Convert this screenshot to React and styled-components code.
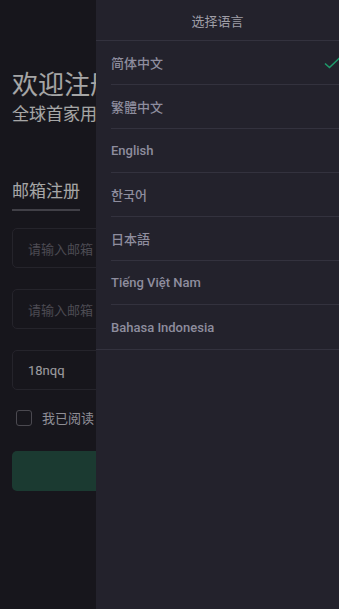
import React from 'react';
import styled, { createGlobalStyle } from 'styled-components';

const GlobalStyle = createGlobalStyle`
  html, body {
    margin: 0;
    padding: 0;
    background: #17161c;
    font-family: Roboto, "Noto Sans CJK SC", sans-serif;
  }
  * { box-sizing: border-box; }
`;

const languages = [
  { label: '简体中文', active: true },
  { label: '繁體中文' },
  { label: 'English' },
  { label: '한국어' },
  { label: '日本語' },
  { label: 'Tiếng Việt Nam' },
  { label: 'Bahasa Indonesia' },
];

const Screen = styled.div`
  position: relative;
  width: 339px;
  height: 609px;
  overflow: hidden;
  background: #24222b;
`;

const Page = styled.div`
  display: flex;
  flex-direction: column;
  padding: 70px 12px 0;
`;

const Title = styled.h1`
  margin: 0;
  font-size: 26px;
  font-weight: 400;
  line-height: 30px;
  color: #ffffff;
  white-space: nowrap;
`;

const Subtitle = styled.p`
  margin: 2px 0 0;
  font-size: 17px;
  line-height: 24px;
  color: #ffffff;
  white-space: nowrap;
`;

const Tab = styled.div`
  align-self: flex-start;
  margin-top: 53px;
  padding-bottom: 6px;
  font-size: 17px;
  line-height: 24px;
  color: #ffffff;
  border-bottom: 2px solid #64636d;
`;

const Form = styled.div`
  display: flex;
  flex-direction: column;
  gap: 21px;
  margin-top: 17px;
`;

const Field = styled.div`
  height: 40px;
  display: flex;
  align-items: center;
  padding: 0 15px;
  border: 1px solid #3a3843;
  border-radius: 5px;
  font-size: 13px;
  white-space: nowrap;
  color: ${(p) => (p.$filled ? '#f0eff6' : '#75737f')};
`;

const Agree = styled.label`
  display: flex;
  align-items: center;
  gap: 10px;
  margin-top: 18px;
  padding-left: 4px;
  font-size: 13px;
  color: #dcdbe5;
  white-space: nowrap;
`;

const Box = styled.span`
  width: 16px;
  height: 16px;
  border: 1px solid #73717c;
  border-radius: 3px;
`;

const SubmitButton = styled.div`
  margin-top: 24px;
  height: 40px;
  border-radius: 5px;
  background: #2a5a4c;
`;

const Overlay = styled.div`
  position: absolute;
  inset: 0;
  background: rgba(0, 0, 0, 0.35);
`;

const Drawer = styled.div`
  position: absolute;
  top: 0;
  right: 0;
  bottom: 0;
  width: 243px;
  background: #23222c;
  display: flex;
  flex-direction: column;
`;

const DrawerHeader = styled.div`
  height: 41px;
  display: flex;
  align-items: center;
  justify-content: center;
  font-size: 13px;
  color: #9f9ea7;
  border-bottom: 1px solid #33323e;
`;

const List = styled.div`
  display: flex;
  flex-direction: column;
  border-bottom: 1px solid #33323e;
`;

const Item = styled.div`
  height: 44px;
  margin-left: 15px;
  display: flex;
  align-items: center;
  justify-content: space-between;
  font-size: 13px;
  font-weight: 500;
  color: #8e8d9e;
  border-bottom: 1px solid #33323e;
  &:last-child { border-bottom: none; }
`;

const Check = () => (
  <svg width="16" height="12" viewBox="0 0 16 12" style={{ marginRight: -1 }}>
    <path d="M1 6.5 L5.5 10.5 L15.5 1" fill="none" stroke="#1f9a6b" strokeWidth="1.6" />
  </svg>
);

export default function App() {
  return (
    <Screen>
      <GlobalStyle />
      <Page>
        <Title>欢迎注册</Title>
        <Subtitle>全球首家用户</Subtitle>
        <Tab>邮箱注册</Tab>
        <Form>
          <Field>请输入邮箱</Field>
          <Field>请输入邮箱</Field>
          <Field $filled>18nqq</Field>
        </Form>
        <Agree>
          <Box />
          我已阅读
        </Agree>
        <SubmitButton />
      </Page>
      <Overlay />
      <Drawer>
        <DrawerHeader>选择语言</DrawerHeader>
        <List>
          {languages.map((lang) => (
            <Item key={lang.label}>
              {lang.label}
              {lang.active && <Check />}
            </Item>
          ))}
        </List>
      </Drawer>
    </Screen>
  );
}
